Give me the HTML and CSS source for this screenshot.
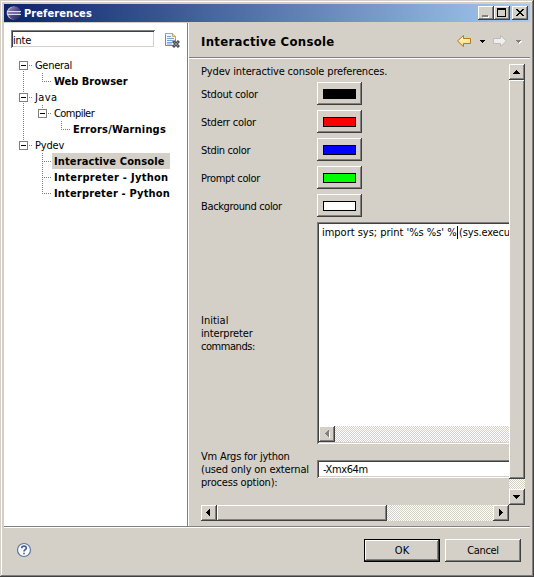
FILE: index.html
```html
<!DOCTYPE html>
<html lang="en">
<head>
<meta charset="utf-8">
<title>Preferences</title>
<link rel="stylesheet" href="styles.css">
</head>
<body>
<svg width="0" height="0" class="defs">
  <defs>
    <symbol id="g-line" viewBox="0 0 19 16"><path class="dots" d="M9.5 0V16"/></symbol>
    <symbol id="g-end" viewBox="0 0 19 16"><path class="dots" d="M9.5 0V8M9 8.5H19"/></symbol>
    <symbol id="g-tee" viewBox="0 0 19 16"><path class="dots" d="M9.5 0V16M9 8.5H19"/></symbol>
    <symbol id="g-box" viewBox="0 0 19 16"><path class="dots" d="M15 8.5H19"/><rect x="5.5" y="4.5" width="8" height="8" fill="#fff" stroke="#808080"/><path d="M7 8.5H12" stroke="#000"/></symbol>
    <symbol id="g-up" viewBox="0 0 19 16"><path class="dots" d="M9.5 0V4"/></symbol>
    <symbol id="g-down" viewBox="0 0 19 16"><path class="dots" d="M9.5 14V16"/></symbol>
  </defs>
</svg>
<div class="window">
  <header class="titlebar">
    <svg class="logo" width="16" height="16" viewBox="0 0 16 16">
      <defs><linearGradient id="orb" x1="0" y1="0" x2="1" y2="1"><stop offset="0" stop-color="#9a92c4"/><stop offset=".5" stop-color="#51468c"/><stop offset="1" stop-color="#2c2255"/></linearGradient></defs>
      <circle cx="7.200" cy="8" r="6.500" fill="#d9b3b0"/>
      <circle cx="8.600" cy="8" r="6.500" fill="url(#orb)"/>
      <path d="M1 6.500H15M1 9.500H15" stroke="#d8dcf4"/><path d="M2 8H14" stroke="#8e91c6"/>
    </svg>
    <span class="caption">Preferences</span>
    <div class="sysbuttons">
      <button class="sys"><svg width="12" height="10" viewBox="0 0 12 10"><path d="M3 8H9V10H3Z" fill="#fff"/><path d="M2 7H8V9H2Z" fill="#808080"/></svg></button>
      <button class="sys"><svg width="12" height="10" viewBox="0 0 12 10"><path d="M1 0H10V9H1ZM2 2V8H9V2Z" fill="#000" fill-rule="evenodd"/></svg></button>
      <button class="sys close"><svg width="12" height="10" viewBox="0 0 12 10"><path d="M2 1h2v1h1v1h2v-1h1v-1h2v1h-1v1h-1v1h-1v1h1v1h1v1h1v1h-2v-1h-1v-1h-2v1h-1v1h-2v-1h1v-1h1v-1h1v-1h-1v-1h-1v-1h-1z" fill="#000"/></svg></button>
    </div>
  </header>
  <main class="body">
    <aside class="nav">
      <div class="filter">
        <div class="field"><span class="t-inte">inte</span></div>
        <svg width="16" height="16" viewBox="0 0 16 16">
          <path d="M1.500 1.500H8.500L11.500 4.500V13.500H1.500Z" fill="#f2f6fc" stroke="#7189b5"/>
          <path d="M1.500 3V1.500H8.500L11.500 4.500V7" fill="none" stroke="#c9a75c"/>
          <path d="M8.500 1.500V4.500H11.500" fill="#f3d991" stroke="#c9a75c"/>
          <path d="M3 4.500H7M3 6.500H10M3 8.500H9M3 10.500H8M3 12H8" stroke="#7fa0d4"/>
          <path d="M9 9L15 15M15 9L9 15" stroke="#505356" stroke-width="3"/>
          <path d="M10 10L14 14M14 10L10 14" stroke="#8b8e91"/>
        </svg>
      </div>
      <div class="tree">
        <div class="node"><svg><use href="#g-box"/><use href="#g-down"/></svg><span class="t-general">General</span></div>
        <div class="node leaf"><svg><use href="#g-line"/></svg><svg><use href="#g-end"/></svg><span class="t-web">Web Browser</span></div>
        <div class="node"><svg><use href="#g-up"/><use href="#g-box"/><use href="#g-down"/></svg><span class="t-java">Java</span></div>
        <div class="node"><svg><use href="#g-line"/></svg><svg><use href="#g-up"/><use href="#g-box"/></svg><span class="t-compiler">Compiler</span></div>
        <div class="node leaf"><svg><use href="#g-line"/></svg><svg></svg><svg><use href="#g-end"/></svg><span class="t-errors">Errors/Warnings</span></div>
        <div class="node"><svg><use href="#g-up"/><use href="#g-box"/></svg><span class="t-pydev">Pydev</span></div>
        <div class="node leaf"><svg></svg><svg><use href="#g-tee"/></svg><span class="t-ic selected">Interactive Console</span></div>
        <div class="node leaf"><svg></svg><svg><use href="#g-tee"/></svg><span class="t-jython">Interpreter - Jython</span></div>
        <div class="node leaf"><svg></svg><svg><use href="#g-end"/></svg><span class="t-python">Interpreter - Python</span></div>
      </div>
    </aside>
    <section class="page">
      <div class="pagehead">
        <h1>Interactive Console</h1>
        <svg width="68" height="16" viewBox="0 0 68 16">
          <defs><linearGradient id="gold" x1="0" y1="0" x2="0" y2="1"><stop offset="0" stop-color="#fffbe0"/><stop offset="1" stop-color="#fbd774"/></linearGradient></defs>
          <path d="M1.500 8L7.500 2.500V5.500H14.500V10.500H7.500V13.500Z" fill="url(#gold)" stroke="#b67b16" stroke-linejoin="round"/>
          <path d="M24 7H29V8H28V9H27V10H26V9H25V8H24Z" fill="#000"/>
          <path d="M50.500 8L44.500 2.500V5.500H37.500V10.500H44.500V13.500Z" fill="#f0efed" stroke="#bdbab5" stroke-linejoin="round"/>
          <path d="M61 8H66V9H65V10H64V11H63V10H62V9H61Z" fill="#fff"/><path d="M60 7H65V8H64V9H63V10H62V9H61V8H60Z" fill="#808080"/>
        </svg>
      </div>
      <div class="scroller">
        <div class="view">
          <p class="intro"><span class="t-intro">Pydev interactive console preferences.</span></p>
          <div class="colorrow"><label class="t-stdout">Stdout color</label><button class="raised"><i class="swatch black"></i></button></div>
          <div class="colorrow"><label class="t-stderr">Stderr color</label><button class="raised"><i class="swatch red"></i></button></div>
          <div class="colorrow"><label class="t-stdin">Stdin color</label><button class="raised"><i class="swatch blue"></i></button></div>
          <div class="colorrow"><label class="t-prompt">Prompt color</label><button class="raised"><i class="swatch lime"></i></button></div>
          <div class="colorrow"><label class="t-bg">Background color</label><button class="raised"><i class="swatch white"></i></button></div>
          <div class="commands">
            <label><span class="t-initial">Initial</span><br><span class="t-interp">interpreter</span><br><span class="t-cmds">commands:</span></label>
            <div class="editor">
              <div class="code"><span class="t-code">import sys; print '%s %s' %</span><i class="caret"></i><span class="t-code2">(sys.execu</span></div>
              <div class="innerbar"><b class="sb"><svg width="12" height="12" viewBox="0 0 12 12"><path d="M9 3V10H8V9H7V8H6V7H7Z" fill="#fff"/><path d="M8 2V9H7V8H6V7H5V6H4V5H5V4H6V3H7V2Z" fill="#808080"/></svg></b></div>
            </div>
          </div>
          <div class="vmargs">
            <label><span class="t-vm">Vm Args for jython</span><br><span class="t-used">(used only on external</span><br><span class="t-proc">process option):</span></label>
            <div class="vmfield"><span class="t-xmx">-Xmx64m</span></div>
          </div>
        </div>
        <div class="vbar">
          <b class="sb"><svg width="12" height="12" viewBox="0 0 12 12"><path d="M5 4H6V5H7V6H8V7H9V8H2V7H3V6H4V5H5Z"/></svg></b>
          <b class="thumb"></b>
          <b class="gap"></b>
          <b class="sb"><svg width="12" height="12" viewBox="0 0 12 12"><path d="M2 4H9V5H8V6H7V7H6V8H5V7H4V6H3V5H2Z"/></svg></b>
        </div>
        <div class="hbar">
          <b class="sb"><svg width="12" height="12" viewBox="0 0 12 12"><path d="M3 5H4V4H5V3H6V2H7V9H6V8H5V7H4V6H3Z"/></svg></b>
          <b class="thumb"></b>
          <b class="gap"></b>
          <b class="sb"><svg width="12" height="12" viewBox="0 0 12 12"><path d="M4 2H5V3H6V4H7V5H8V6H7V7H6V8H5V9H4Z"/></svg></b>
        </div>
      </div>
    </section>
  </main>
  <footer class="foot">
    <svg width="16" height="16" viewBox="0 0 16 16"><circle cx="8" cy="8" r="6.500" fill="#f8fafd" stroke="#5a76a0" stroke-width="1.200"/><path d="M5.700 6.300C5.700 3.400 10.300 3.400 10.300 6C10.300 7.700 8 7.700 8 9.600M8 10.700V12.300" fill="none" stroke="#4d5f91" stroke-width="1.700"/></svg>
    <div class="actions">
      <button class="push default"><span class="t-ok">OK</span></button>
      <button class="push"><span class="t-cancel">Cancel</span></button>
    </div>
  </footer>
</div>
</body>
</html>
```
FILE: styles.css
```css
* { box-sizing: border-box; }
body {
  margin: 0;
  font: 11px/13px "DejaVu Sans Condensed", "DejaVu Sans", sans-serif;
  font-stretch: condensed;
  color: #000;
}
button { font: inherit; margin: 0; padding: 0; color: inherit; }
svg { display: block; flex: none; }
span, label { white-space: nowrap; }
.defs { position: absolute; }
.dots { stroke: #808080; stroke-dasharray: 1 1; fill: none; }

.window {
  width: 534px;
  height: 577px;
  overflow: hidden;
  background: #d4d0c8;
  padding: 4px 4px 2px;
  box-shadow: inset -1px -1px #404040, inset 1px 1px #d4d0c8, inset -2px -2px #808080, inset 2px 2px #fff;
}
.titlebar {
  height: 18px;
  margin-bottom: 1px;
  padding: 0 2px;
  display: flex;
  align-items: center;
  background: linear-gradient(90deg, #0a246a, #a6caf0);
  color: #fff;
  font-weight: bold;
}
.caption { margin-left: 2px; letter-spacing: 0.08px; }
.sysbuttons { display: flex; margin-left: auto; }
.sys, .raised, .push, .sb, .thumb {
  background: #d4d0c8;
  border: 0;
  box-shadow: inset -1px -1px #404040, inset 1px 1px #fff, inset -2px -2px #808080;
}
.sys { width: 16px; height: 14px; padding: 2px 2px; }
.close { margin-left: 2px; }

.body { display: flex; height: 503px; }
.nav { width: 183px; background: #fff; padding-top: 7px; }
.filter { display: flex; gap: 9px; padding-left: 7px; }
.field, .vmfield, .editor {
  background: #fff;
  box-shadow: inset 1px 1px #808080, inset -1px -1px #fff, inset 2px 2px #404040, inset -2px -2px #d4d0c8;
}
.field { width: 144px; height: 18px; padding: 4px 0 0 2px; letter-spacing: -0.2px; }
.filter svg { margin-top: 2px; }
.tree { margin-top: 9px; padding-left: 10px; }
.node { display: flex; height: 16px; }
.node svg { width: 19px; height: 16px; shape-rendering: crispEdges; }
.node span { height: 16px; padding: 1px 0 0 2px; line-height: 16px; }
.leaf span { font-weight: bold; }
.node .selected { background: #d4d0c8; width: 118px; }

.t-general { letter-spacing: -0.3px; }
.t-compiler { letter-spacing: -0.55px; }
.t-pydev { letter-spacing: -0.2px; }
.t-java { letter-spacing: 0.4px; }
.t-errors { letter-spacing: 0.18px; }
.t-ic { letter-spacing: 0.12px; }
.t-jython { letter-spacing: 0.28px; }
.t-python { letter-spacing: 0.17px; }
.t-intro { letter-spacing: -0.16px; }
.t-stdout, .t-stderr { letter-spacing: -0.27px; }
.t-stdin { letter-spacing: -0.35px; }
.t-prompt { letter-spacing: -0.33px; }
.t-bg { letter-spacing: -0.36px; }
.t-interp { letter-spacing: -0.15px; }
.t-cmds { letter-spacing: -0.45px; }
.t-code { letter-spacing: -0.02px; }
.t-code2 { margin-left: 1.5px; letter-spacing: -0.15px; }
.t-vm { letter-spacing: -0.22px; }
.t-used { letter-spacing: -0.14px; }
.t-proc { letter-spacing: -0.2px; }
.t-xmx { letter-spacing: -0.4px; }
.t-cancel { letter-spacing: -0.35px; }

.page { width: 343px; border-left: 1px solid #808080; box-shadow: inset 1px 0 #fff; padding-left: 1px; }
.pagehead {
  height: 36px;
  display: flex;
  align-items: center;
  justify-content: space-between;
  padding: 1px 6px 0 12px;
  border-bottom: 1px solid #fff;
  box-shadow: inset 0 -1px #808080;
}
h1 { margin: 0; padding-top: 1px; font-size: 13px; line-height: 17px; letter-spacing: 0.3px; white-space: nowrap; }
.scroller {
  display: grid;
  grid-template-columns: 308px 16px;
  grid-template-rows: 441px 16px;
  margin: 5px 0 0 12px;
}
.view { overflow: hidden; }
.intro { margin: 0; height: 18px; padding-top: 1px; }
.colorrow { display: flex; align-items: center; height: 23px; margin-bottom: 5px; }
.colorrow label { width: 116px; padding-top: 1px; }
.raised { width: 45px; height: 23px; padding: 1px 0 0 6px; }
.swatch { display: block; width: 33px; height: 10px; border: 1px solid #000; }
.black { background: #000; }
.red { background: #f00; }
.blue { background: #00f; }
.lime { background: #0f0; }
.white { background: #fff; }
.commands { display: flex; align-items: center; height: 222px; }
.commands label, .vmargs label { width: 116px; flex: none; }
.editor { width: 400px; height: 222px; flex: none; padding: 2px; display: flex; flex-direction: column; justify-content: space-between; }
.code { display: flex; padding: 2px 0 0 3px; }
.caret { width: 1px; height: 13px; background: #000; }
.innerbar, .gap { background: repeating-conic-gradient(#fff 0 25%, #d4d0c8 0 50%) 0 0 / 2px 2px; }
.innerbar { height: 16px; }
.sb { display: block; width: 16px; height: 16px; padding: 2px; flex: none; }
.vmargs { display: flex; align-items: center; height: 39px; margin-top: 6px; }
.vmfield { width: 400px; height: 18px; flex: none; margin-bottom: 1px; padding: 3px 0 0 6px; }
.vbar { display: flex; flex-direction: column; }
.vbar .thumb { height: 399px; }
.hbar { display: flex; }
.hbar .thumb { width: 170px; }
.gap { flex: 1; }

.foot {
  height: 49px;
  display: flex;
  justify-content: space-between;
  border-top: 1px solid #808080;
  box-shadow: inset 0 1px #fff;
  padding: 12px 9px 0 12px;
}
.foot > svg { margin-top: 3px; }
.actions { display: flex; gap: 5px; }
.push { width: 76px; height: 23px; }
.default { border: 1px solid #000; }
```
